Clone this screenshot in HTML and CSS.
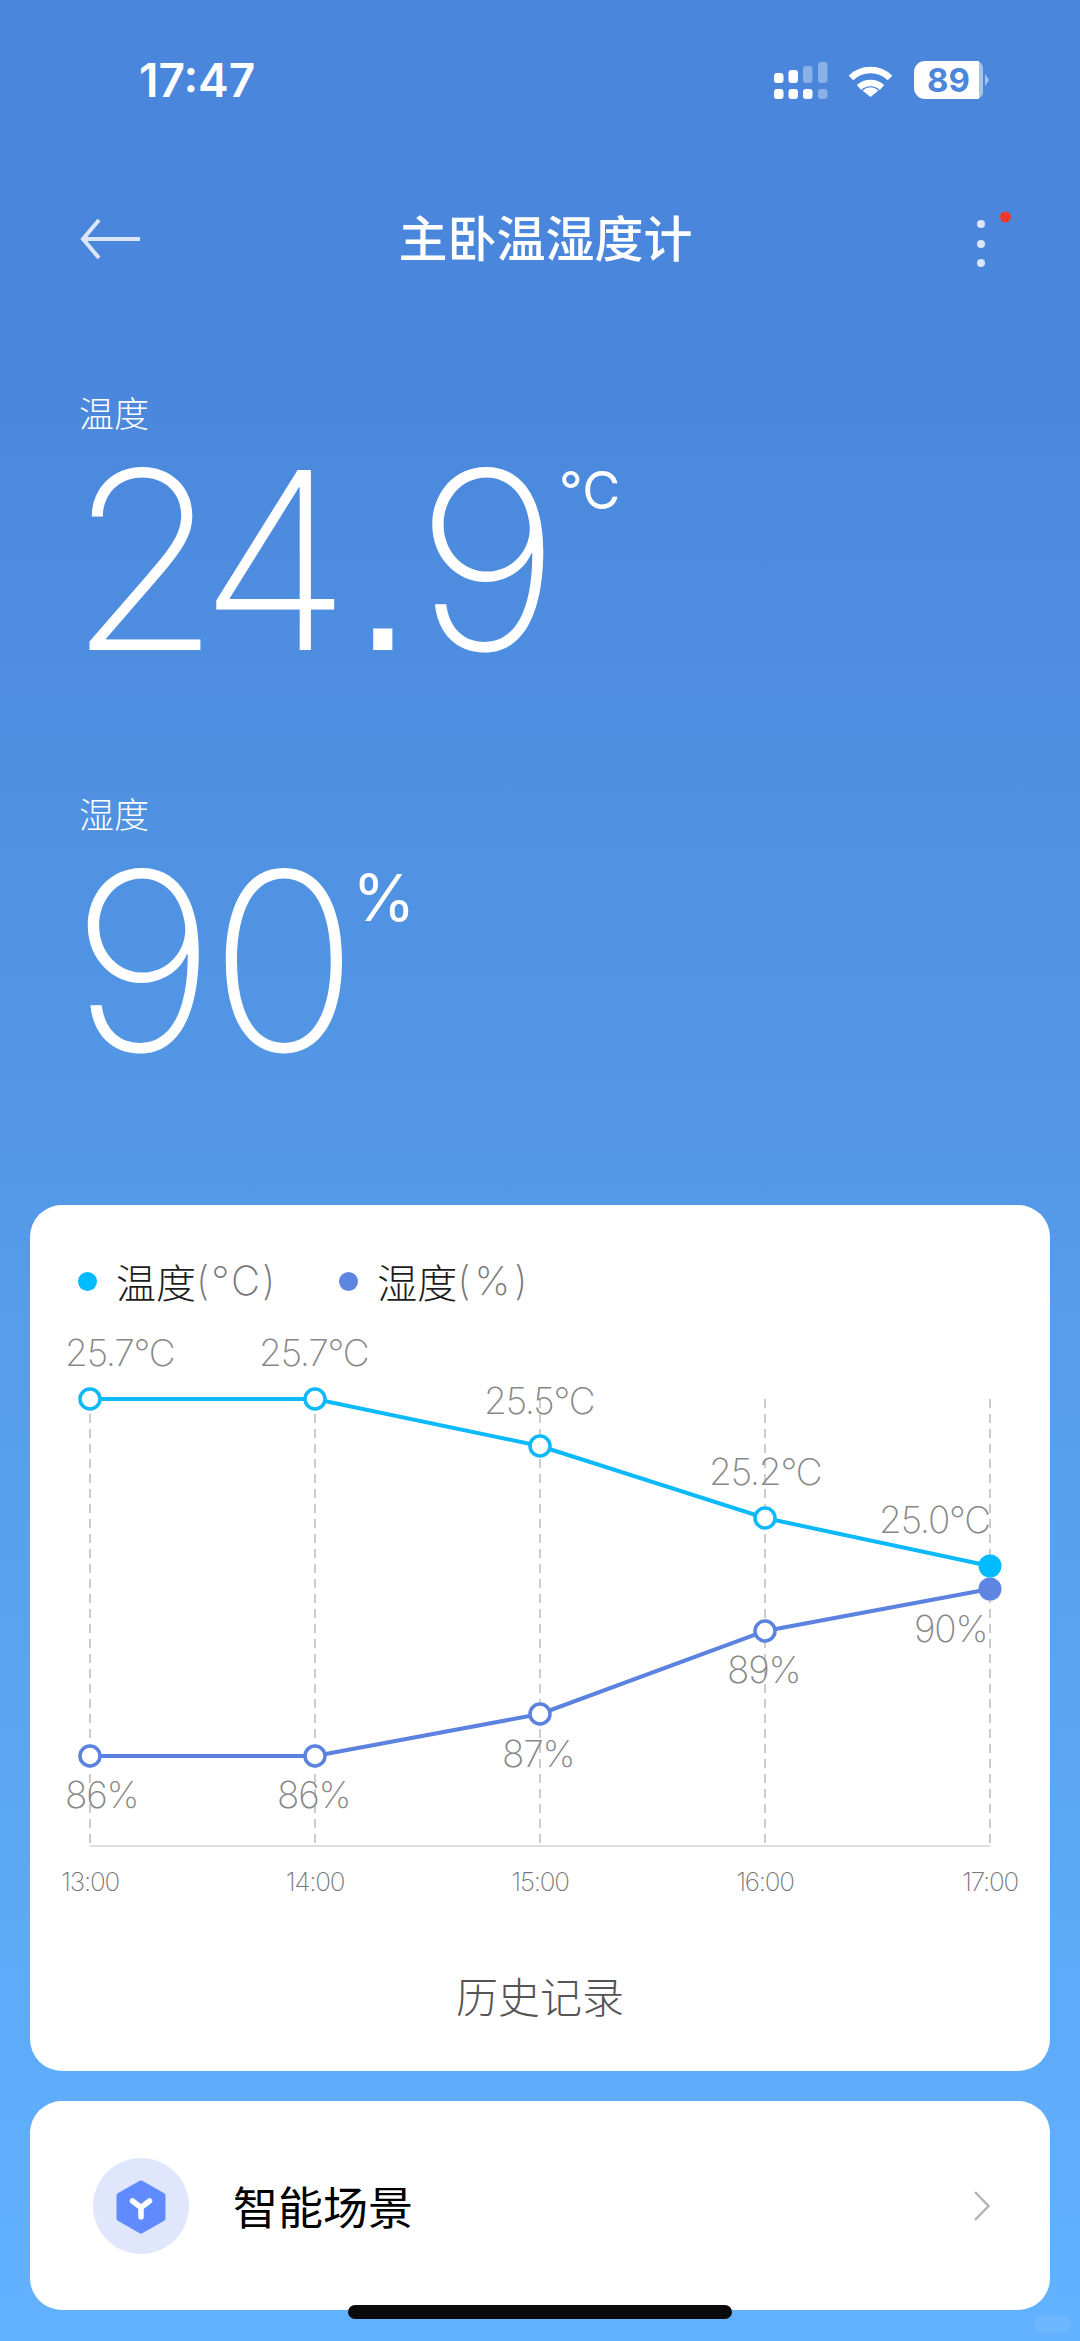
FILE: index.html
```html
<!DOCTYPE html>
<html lang="zh-CN">
<head>
<meta charset="utf-8">
<title>主卧温湿度计</title>
<link rel="stylesheet" href="styles.css">
</head>
<body>
<div class="page">
  <header class="status">
    <span class="time">17:47</span>
    <svg class="status-icons" width="217" height="40" viewBox="774 60 217 40">
      <g fill="#fff">
        <rect x="775" y="73" width="9.5" height="10" rx="3"/>
        <rect x="789.5" y="70" width="9.5" height="13" rx="3"/>
        <rect x="775" y="89" width="9.5" height="10" rx="3"/>
        <rect x="789.5" y="89" width="9.5" height="10" rx="3"/>
        <rect x="804" y="89" width="9.5" height="10" rx="3"/>
      </g>
      <g fill="#fff" opacity=".35">
        <rect x="804" y="66" width="9.5" height="17" rx="3"/>
        <rect x="819" y="62" width="9.5" height="21" rx="3"/>
        <rect x="819" y="89" width="9.5" height="10" rx="3"/>
      </g>
      <g fill="none" stroke="#fff" stroke-width="6.5">
        <path d="M852 78 A28 28 0 0 1 891 78"/>
        <path d="M860 87.500 A17 17 0 0 1 883 87.500"/>
      </g>
      <path d="M871.500 97 L863.500 90.500 Q871.500 84 879.500 90.500 Z" fill="#fff"/>
      <path d="M972 61 H977 A7 7 0 0 1 984 68 V92 A7 7 0 0 1 977 99 H972 Z" fill="#fff" opacity=".5"/>
      <path d="M926 61 H980 V99 H926 A11 11 0 0 1 915 88 V72 A11 11 0 0 1 926 61 Z" fill="#fff"/>
      <path d="M986 74 L990 80 L986 86 Z" fill="#fff" opacity=".5"/>
      <text class="battery-text" x="949.500" y="92" text-anchor="middle">89</text>
    </svg>
  </header>

  <nav class="nav">
    <svg class="back" width="60" height="44" viewBox="0 0 60 44">
      <path d="M60 21 H3 M19 2 L3 21 L19 40" fill="none" stroke="#dbe7f8" stroke-width="4"/>
    </svg>
    <h1 class="title">主卧温湿度计</h1>
    <svg class="menu" width="64" height="60" viewBox="951 205 64 60">
      <circle cx="981" cy="219" r="4" fill="#dbe7f8"/>
      <circle cx="981" cy="239" r="4" fill="#dbe7f8"/>
      <circle cx="981" cy="258" r="4" fill="#dbe7f8"/>
      <circle cx="1005.500" cy="212" r="5.500" fill="#f0392b"/>
    </svg>
  </nav>

  <section class="readings">
    <div class="reading">
      <div class="reading-label">温度</div>
      <div class="reading-row">
        <span class="reading-value value-temp">24<span class="point">.</span>9</span>
        <span class="reading-unit unit-temp">°C</span>
      </div>
    </div>
    <div class="reading">
      <div class="reading-label">湿度</div>
      <div class="reading-row">
        <span class="reading-value value-hum">90</span>
        <span class="reading-unit unit-hum">%</span>
      </div>
    </div>
  </section>

  <section class="card chart-card">
    <div class="legend">
      <span class="legend-item"><i class="dot dot-temp"></i><span class="legend-name">温度</span><span class="legend-unit">(°C)</span></span>
      <span class="legend-item"><i class="dot dot-hum"></i><span class="legend-name">湿度</span><span class="legend-unit legend-unit-wide">(%)</span></span>
    </div>
    <svg class="chart" width="1020" height="580" viewBox="30 1320 1020 580">
      <g class="grid">
        <line x1="90" y1="1399" x2="90" y2="1846"/>
        <line x1="315" y1="1399" x2="315" y2="1846"/>
        <line x1="540" y1="1399" x2="540" y2="1846"/>
        <line x1="765" y1="1399" x2="765" y2="1846"/>
        <line x1="990" y1="1399" x2="990" y2="1846"/>
      </g>
      <line class="axis" x1="90" y1="1846" x2="990" y2="1846"/>

      <polyline class="line-temp" points="90,1399 315,1399 540,1446 765,1518 990,1566"/>
      <polyline class="line-hum" points="90,1756 315,1756 540,1714 765,1631 990,1589"/>

      <g class="pt-temp">
        <circle cx="90" cy="1399" r="10"/>
        <circle cx="315" cy="1399" r="10"/>
        <circle cx="540" cy="1446" r="10"/>
        <circle cx="765" cy="1518" r="10"/>
      </g>
      <g class="pt-hum">
        <circle cx="90" cy="1756" r="10"/>
        <circle cx="315" cy="1756" r="10"/>
        <circle cx="540" cy="1714" r="10"/>
        <circle cx="765" cy="1631" r="10"/>
      </g>
      <circle cx="990" cy="1566" r="11.500" fill="#00bbff"/>
      <circle cx="990" cy="1589" r="11.500" fill="#5f85e3"/>

      <g class="val">
        <text x="65" y="1366">25.7°C</text>
        <text x="259" y="1366">25.7°C</text>
        <text x="484" y="1414">25.5°C</text>
        <text x="709" y="1485">25.2°C</text>
        <text x="879" y="1533">25.0°C</text>
        <text x="65" y="1808">86%</text>
        <text x="277" y="1808">86%</text>
        <text x="502" y="1767">87%</text>
        <text x="727" y="1683">89%</text>
        <text x="914" y="1642">90%</text>
      </g>
      <g class="tick">
        <text x="90" y="1891">13:00</text>
        <text x="315" y="1891">14:00</text>
        <text x="540" y="1891">15:00</text>
        <text x="765" y="1891">16:00</text>
        <text x="990" y="1891">17:00</text>
      </g>
    </svg>
    <div class="history">历史记录</div>
  </section>

  <section class="card scene-card">
    <svg class="scene-icon" width="96" height="96" viewBox="0 0 96 96">
      <circle cx="48" cy="48" r="48" fill="#e0e7fd"/>
      <path d="M48 25 L70 37.500 V60.500 L48 73 L26 60.500 V37.500 Z" fill="#5f8bff" stroke="#5f8bff" stroke-width="5" stroke-linejoin="round"/>
      <path d="M39.500 43 L48 49.500 L56.500 43 M48 49.500 V59" fill="none" stroke="#fff" stroke-width="5.500" stroke-linecap="round" stroke-linejoin="round"/>
    </svg>
    <span class="scene-name">智能场景</span>
    <svg class="chevron" width="16" height="30" viewBox="0 0 16 30">
      <path d="M1 1 L14.500 15 L1 29" fill="none" stroke="#b5b5b5" stroke-width="2.500"/>
    </svg>
  </section>

  <div class="home-bar"></div>
  <div class="watermark"></div>
</div>
</body>
</html>
```

FILE: styles.css
```css
* { box-sizing: border-box; }
html, body { margin: 0; padding: 0; }
body {
  font-family: "Inter", "Noto Sans CJK SC", sans-serif;
}
.page {
  position: relative;
  width: 1080px;
  height: 2341px;
  overflow: hidden;
  background: linear-gradient(180deg, #4a86db 0, #4a86db 300px, #5397e5 1100px, #58a3f0 1600px, #5fadfa 2100px, #62b2ff 2341px);
}
.status {
  height: 160px;
  padding: 0 90px 0 139px;
  display: flex;
  align-items: center;
  justify-content: space-between;
}
.time {
  color: #fff;
  font: 600 46px/1 "Inter", sans-serif;
}
.status-icons { display: block; }
.battery-text {
  font: 700 33px "Inter", sans-serif;
  fill: #4a86db;
}
.nav {
  height: 160px;
  padding: 0 65px 0 80px;
  display: flex;
  align-items: center;
  justify-content: space-between;
}
.back, .menu { display: block; }
.title {
  margin: -10px 0 0;
  color: #fff;
  font: 500 49px/1 "Noto Sans CJK SC", sans-serif;
}
.readings {
  padding: 72px 0 0 79px;
  color: #fff;
}
.reading { height: 401px; }
.reading-label {
  font: 300 35px/40px "Noto Sans CJK SC", sans-serif;
  height: 53px;
}
.reading-row {
  display: flex;
  align-items: flex-start;
}
.reading-value {
  font: 235 248px/230px "Inter", sans-serif;
}
.value-temp { margin-left: -11px; letter-spacing: -18px; }
.value-hum { margin-left: -8px; letter-spacing: -6.500px; }
.point {
  font: 400 200px/230px "Liberation Sans", sans-serif;
  margin: 0 23px 0 22px;
}
.reading-unit {
  font: 400 52px/60px "Inter", sans-serif;
}
.unit-temp { margin: 16px 0 0 17px; }
.unit-hum { margin: 22px 0 0 0; font-size: 64px; }
.card {
  margin: 0 30px;
  background: #fff;
  border-radius: 32px;
}
.chart-card {
  margin-top: 11px;
  height: 866px;
  padding-top: 56px;
}
.legend {
  height: 59px;
  padding-left: 48px;
  display: flex;
  gap: 62px;
}
.legend-item {
  display: flex;
  align-items: center;
  height: 40px;
}
.dot {
  width: 19px;
  height: 19px;
  border-radius: 50%;
  margin-right: 19px;
}
.dot-temp { background: #00bbff; }
.dot-hum { background: #5f85e3; }
.legend-name {
  font: 300 40px/40px "Noto Sans CJK SC", sans-serif;
  color: #1c1c1c;
}
.legend-unit {
  font: 250 40px/40px "Inter", sans-serif;
  letter-spacing: 2px;
  color: #777;
}
.legend-unit-wide { letter-spacing: 4px; }
.chart { display: block; }
.grid line {
  stroke: #ccc;
  stroke-width: 2;
  stroke-dasharray: 9 6;
}
.axis { stroke: #ddd; stroke-width: 2; }
.line-temp, .line-hum { fill: none; stroke-width: 4; }
.line-temp { stroke: #0cb9fa; }
.line-hum { stroke: #5b82de; }
.pt-temp circle, .pt-hum circle { fill: #fff; stroke-width: 3.5; }
.pt-temp circle { stroke: #0cb9fa; }
.pt-hum circle { stroke: #5b82de; }
.val text {
  font: 250 37px "Inter", sans-serif;
  letter-spacing: -1.2px;
  fill: #888;
}
.tick text {
  font: 250 26px "Inter", sans-serif;
  letter-spacing: -1.200px;
  fill: #777;
  text-anchor: middle;
}
.history {
  padding-top: 18px;
  height: 171px;
  display: flex;
  align-items: center;
  justify-content: center;
  font: 300 42px/1 "Noto Sans CJK SC", sans-serif;
  color: #555;
}
.scene-card {
  margin-top: 30px;
  height: 209px;
  padding: 0 60px 0 63px;
  display: flex;
  align-items: center;
}
.scene-icon { display: block; }
.scene-name {
  margin-left: 44px;
  font: 400 45px/1 "Noto Sans CJK SC", sans-serif;
  color: #000;
}
.chevron { display: block; margin-left: auto; }
.home-bar {
  position: absolute;
  left: 348px;
  top: 2305px;
  width: 384px;
  height: 14px;
  border-radius: 7px;
  background: #0a0a0c;
}
.watermark {
  position: absolute;
  left: 1034px;
  top: 2315px;
  width: 37px;
  height: 18px;
  border-radius: 9px;
  background: rgba(255, 255, 255, .07);
}
```
